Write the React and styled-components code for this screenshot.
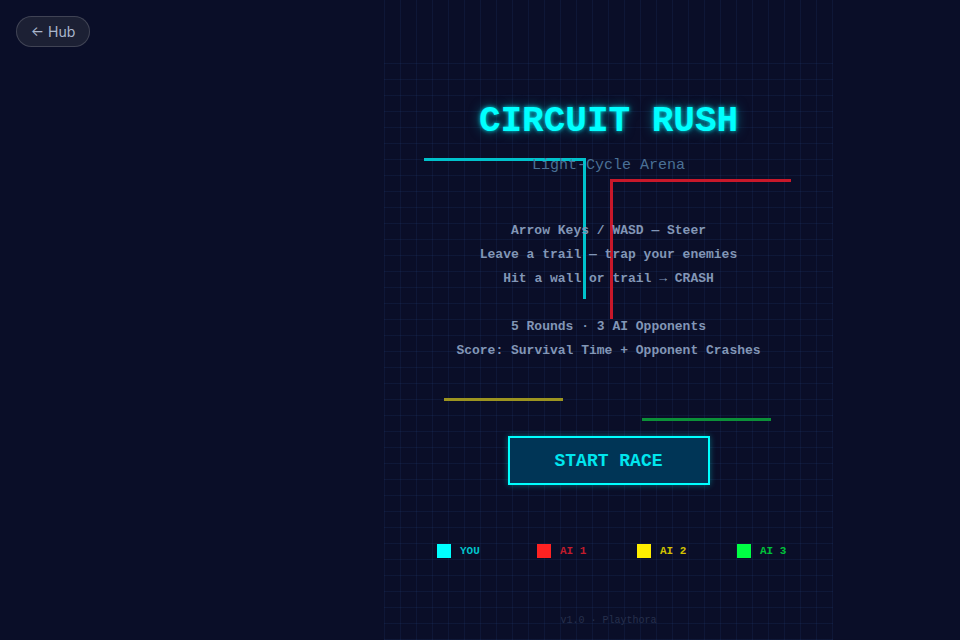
import React from "react";
import styled, { createGlobalStyle } from "styled-components";

const GlobalStyle = createGlobalStyle`
  html, body {
    margin: 0;
    padding: 0;
    background: #0a0e28;
  }
  #root {
    min-height: 100vh;
  }
`;

const Page = styled.div`
  display: grid;
  grid-template-columns: 384px 449px 1fr;
  height: 640px;
  overflow: hidden;
  background: #0a0e28;
  font-family: "Liberation Mono", "Courier New", monospace;
`;

const HubButton = styled.button`
  position: absolute;
  top: 16px;
  left: 16px;
  z-index: 5;
  width: 74px;
  height: 31px;
  padding: 0;
  border-radius: 16px;
  border: 1px solid rgba(255, 255, 255, 0.16);
  background: #1c2034;
  color: #aab6cc;
  font-family: Inter, "Liberation Sans", sans-serif;
  font-size: 14px;
  display: flex;
  align-items: center;
  justify-content: center;
  cursor: pointer;
`;

const Board = styled.div`
  grid-column: 2;
  position: relative;
  height: 640px;
  padding-top: 63px;
  box-sizing: border-box;
  background-image: linear-gradient(
    to right,
    rgba(40, 80, 150, 0.14) 1px,
    transparent 1px
  );
  background-size: 16px 16px;
`;

const Field = styled.div`
  height: 100%;
  background-image: linear-gradient(
    to bottom,
    rgba(40, 80, 150, 0.14) 1px,
    transparent 1px
  );
  background-size: 16px 16px;
`;

const Trails = styled.svg`
  position: absolute;
  left: 0;
  top: 0;
  width: 449px;
  height: 640px;
  pointer-events: none;
`;

const Overlay = styled.div`
  position: absolute;
  inset: 0;
  display: flex;
  flex-direction: column;
  align-items: center;
  padding-top: 103px;
  box-sizing: border-box;
`;

const Title = styled.h1`
  margin: 0;
  font-size: 36px;
  line-height: 38px;
  font-weight: 700;
  color: #00ffff;
  text-shadow: 0 0 4px rgba(0, 255, 255, 0.8), 0 0 12px rgba(0, 200, 220, 0.5);
`;

const Subtitle = styled.div`
  margin-top: 16px;
  font-size: 15px;
  line-height: 18px;
  color: #4a7196;
`;

const Instructions = styled.div`
  margin-top: 44px;
  display: flex;
  flex-direction: column;
  align-items: center;
  gap: 24px;
`;

const Group = styled.div`
  display: flex;
  flex-direction: column;
  align-items: center;
`;

const Line = styled.div`
  font-size: 13px;
  line-height: 24px;
  font-weight: 700;
  color: #8296b6;
  white-space: nowrap;
`;

const StartButton = styled.button`
  margin-top: 73px;
  width: 202px;
  height: 49px;
  border: 2px solid #00ffff;
  background: #003556;
  color: #00e6ee;
  font-family: "Liberation Mono", "Courier New", monospace;
  font-size: 18px;
  font-weight: 700;
  box-shadow: 0 0 6px rgba(0, 255, 255, 0.35);
  cursor: pointer;
`;

const Legend = styled.div`
  align-self: flex-start;
  margin-left: 53px;
  margin-top: 59px;
  display: grid;
  grid-template-columns: repeat(4, 100px);
`;

const LegendItem = styled.div`
  display: flex;
  align-items: center;
  gap: 9px;
  font-size: 11px;
  font-weight: 700;
  color: ${(p) => p.$text};
`;

const Swatch = styled.span`
  width: 14px;
  height: 14px;
  background: ${(p) => p.$color};
`;

const Footer = styled.div`
  margin-top: auto;
  margin-bottom: 14px;
  font-size: 10px;
  color: #27304c;
`;

const players = [
  { name: "YOU", color: "#00ffff", text: "#00c4cc" },
  { name: "AI 1", color: "#ff2222", text: "#c21c2c" },
  { name: "AI 2", color: "#ffee00", text: "#d2c200" },
  { name: "AI 3", color: "#00ff44", text: "#00c23a" },
];

export default function App() {
  return (
    <>
      <GlobalStyle />
      <HubButton>← Hub</HubButton>
      <Page>
        <div />
        <Board>
          <Field />
          <Trails viewBox="0 0 449 640">
            <path d="M40 159.5 H200.5 V299" stroke="#00c2cc" strokeWidth="3" fill="none" />
            <path d="M227.5 319 V180.5 H407" stroke="#c8182a" strokeWidth="3" fill="none" />
            <path d="M60 399.5 H179" stroke="#9c9420" strokeWidth="3" fill="none" />
            <path d="M258 419.5 H387" stroke="#0b9038" strokeWidth="3" fill="none" />
          </Trails>
          <Overlay>
            <Title>CIRCUIT RUSH</Title>
            <Subtitle>Light-Cycle Arena</Subtitle>
            <Instructions>
              <Group>
                <Line>Arrow Keys / WASD — Steer</Line>
                <Line>Leave a trail — trap your enemies</Line>
                <Line>Hit a wall or trail → CRASH</Line>
              </Group>
              <Group>
                <Line>5 Rounds · 3 AI Opponents</Line>
                <Line>Score: Survival Time + Opponent Crashes</Line>
              </Group>
            </Instructions>
            <StartButton>START RACE</StartButton>
            <Legend>
              {players.map((p) => (
                <LegendItem key={p.name} $text={p.text}>
                  <Swatch $color={p.color} />
                  {p.name}
                </LegendItem>
              ))}
            </Legend>
            <Footer>v1.0 · Playthora</Footer>
          </Overlay>
        </Board>
        <div />
      </Page>
    </>
  );
}
